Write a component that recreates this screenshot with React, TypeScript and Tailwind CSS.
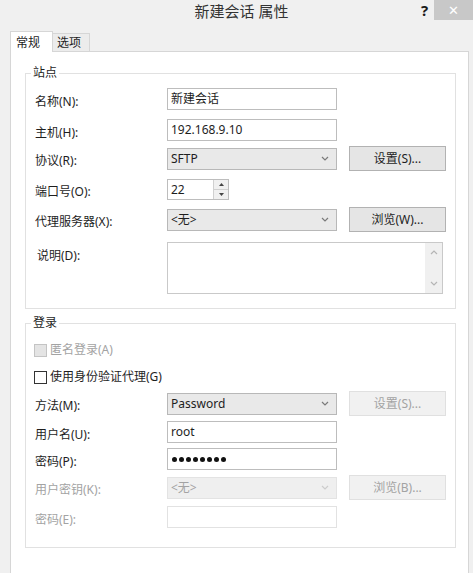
import React from 'react';

const font = "font-['Noto_Sans','Noto_Sans_CJK_SC',sans-serif]";

function Chevron({ disabled = false }: { disabled?: boolean }) {
    return (
        <svg width="8" height="5" viewBox="0 0 8 5">
            <path d="M1 1l3 3 3-3" fill="none" stroke={disabled ? '#cccccc' : '#7a7a7a'} strokeWidth="1.2" />
        </svg>
    );
}

function Label({ children, disabled = false }: { children: React.ReactNode; disabled?: boolean }) {
    return <div className={`w-[132px] pt-[5px] text-[12px] leading-[16px] ${disabled ? 'text-[#a3a3a3]' : 'text-[#1e1e1e]'}`}>{children}</div>;
}

function TextBox({ value, disabled = false }: { value?: React.ReactNode; disabled?: boolean }) {
    return (
        <div
            className={`flex h-[22px] w-[170px] items-center border bg-white px-[3px] text-[12px] text-[#1e1e1e] ${disabled ? 'border-[#e2e2e2]' : 'border-[#bdbdbd]'}`}
        >
            {value}
        </div>
    );
}

function Select({ value, disabled = false }: { value: string; disabled?: boolean }) {
    return (
        <div
            className={`flex h-[22px] w-[170px] items-center justify-between border pr-[7px] pl-[3px] text-[12px] ${
                disabled ? 'border-[#e3e3e3] bg-[#efefef] text-[#a3a3a3]' : 'border-[#b8b8b8] bg-[#e9e9e9] text-[#1e1e1e]'
            }`}
        >
            <span>{value}</span>
            <Chevron disabled={disabled} />
        </div>
    );
}

function Button({ children, disabled = false }: { children: React.ReactNode; disabled?: boolean }) {
    return (
        <div
            className={`ml-[12px] flex h-[25px] w-[97px] items-center justify-center border text-[12px] ${
                disabled ? 'border-[#e0e0e0] bg-[#f1f1f1] text-[#a3a3a3]' : 'border-[#b2b2b2] bg-[#e5e5e5] text-[#1e1e1e]'
            }`}
        >
            {children}
        </div>
    );
}

export default function App() {
    return (
        <div className={`flex h-[573px] w-[473px] flex-col overflow-hidden bg-[#f0f0f0] ${font}`}>
            {/* Title bar */}
            <div className="flex h-[21px] items-center">
                <div className="w-[68px]" />
                <div className="flex-1 text-center text-[15px] leading-[20px] text-[#333]">新建会话 属性</div>
                <div className="flex h-full w-[58px] items-start">
                    <div className="w-[19px] pt-[1px] text-center text-[15px] leading-[18px] font-bold text-[#1a1a1a]">?</div>
                    <div className="flex h-[20px] w-[39px] items-center justify-center bg-[#c8c8c8] text-[13px] leading-none text-white">✕</div>
                </div>
            </div>

            {/* Tabs */}
            <div className="flex h-[30px] items-end pl-[10px]">
                <div className="relative z-10 -mb-px h-[21px] w-[43px] border-x border-t border-[#d6d6d6] bg-white pt-[3px] pl-[5px] text-[12px] leading-[16px] text-[#1e1e1e]">
                    常规
                </div>
                <div className="h-[18px] w-[37px] border-t border-r border-[#d6d6d6] bg-[#ececec] pt-[1px] pl-[4px] text-[12px] leading-[16px] text-[#1e1e1e]">
                    选项
                </div>
            </div>

            {/* Panel */}
            <div className="mr-[4px] ml-[10px] flex-1 border-x border-t border-[#d6d6d6] bg-white pt-[13px]">
                {/* 站点 */}
                <fieldset className="mr-[12px] ml-[14px] border border-[#e1e1e1] px-0 pb-[14px]">
                    <legend className="ml-[5px] px-[2px] text-[12px] leading-[16px] text-[#1e1e1e]">站点</legend>
                    <div className="pl-[9px]">
                        <div className="mt-[7px] flex h-[22px] items-center">
                            <Label>名称(N):</Label>
                            <TextBox value="新建会话" />
                        </div>
                        <div className="mt-[9px] flex h-[22px] items-center">
                            <Label>主机(H):</Label>
                            <TextBox value="192.168.9.10" />
                        </div>
                        <div className="mt-[5px] flex h-[25px] items-center">
                            <Label>协议(R):</Label>
                            <Select value="SFTP" />
                            <Button>设置(S)...</Button>
                        </div>
                        <div className="mt-[8px] flex h-[21px] items-center">
                            <Label>端口号(O):</Label>
                            <div className="flex h-[21px] w-[62px] border border-[#bdbdbd] bg-white">
                                <div className="flex-1 px-[3px] text-[12px] leading-[19px] text-[#1e1e1e]">22</div>
                                <div className="flex w-[15px] flex-col border-l border-[#d0d0d0]">
                                    <div className="flex flex-1 items-center justify-center border-b border-[#d0d0d0] bg-[#f0f0f0]">
                                        <svg width="5" height="3" viewBox="0 0 5 3">
                                            <path d="M0 3L2.5 0 5 3z" fill="#444" />
                                        </svg>
                                    </div>
                                    <div className="flex flex-1 items-center justify-center bg-[#f0f0f0]">
                                        <svg width="5" height="3" viewBox="0 0 5 3">
                                            <path d="M0 0L2.5 3 5 0z" fill="#444" />
                                        </svg>
                                    </div>
                                </div>
                            </div>
                        </div>
                        <div className="mt-[7px] flex h-[25px] items-center">
                            <Label>代理服务器(X):</Label>
                            <Select value="<无>" />
                            <Button>浏览(W)...</Button>
                        </div>
                        <div className="mt-[10px] flex items-start">
                            <div className="w-[132px] pt-[6px] pl-[2px] text-[12px] leading-[16px] text-[#1e1e1e]">说明(D):</div>
                            <div className="flex h-[52px] w-[276px] border border-[#c9c9c9] bg-white">
                                <div className="flex-1" />
                                <div className="flex w-[17px] flex-col items-center justify-between bg-[#f0f0f0] py-[7px]">
                                    <svg width="8" height="5" viewBox="0 0 8 5">
                                        <path d="M1 4l3-3 3 3" fill="none" stroke="#b5b5b5" strokeWidth="1.2" />
                                    </svg>
                                    <svg width="8" height="5" viewBox="0 0 8 5">
                                        <path d="M1 1l3 3 3-3" fill="none" stroke="#b5b5b5" strokeWidth="1.2" />
                                    </svg>
                                </div>
                            </div>
                        </div>
                    </div>
                </fieldset>

                {/* 登录 */}
                <fieldset className="mt-[6px] mr-[12px] ml-[14px] border border-[#e1e1e1] px-0 pb-[19px]">
                    <legend className="ml-[5px] px-[2px] text-[12px] leading-[16px] text-[#1e1e1e]">登录</legend>
                    <div className="pl-[9px]">
                        <div className="mt-[11px] flex h-[16px] items-center">
                            <div className="-ml-px h-[13px] w-[13px] border border-[#c4c4c4] bg-[#e4e4e4]" />
                            <span className="ml-[3px] text-[12px] text-[#a3a3a3]">匿名登录(A)</span>
                        </div>
                        <div className="mt-[11px] flex h-[16px] items-center">
                            <div className="-ml-px h-[13px] w-[13px] border border-[#333] bg-white" />
                            <span className="ml-[3px] text-[12px] text-[#1e1e1e]">使用身份验证代理(G)</span>
                        </div>
                        <div className="mt-[6px] flex h-[25px] items-center">
                            <Label>方法(M):</Label>
                            <Select value="Password" />
                            <Button disabled>设置(S)...</Button>
                        </div>
                        <div className="mt-[5px] flex h-[22px] items-center">
                            <Label>用户名(U):</Label>
                            <TextBox value="root" />
                        </div>
                        <div className="mt-[5px] flex h-[22px] items-center">
                            <Label>密码(P):</Label>
                            <TextBox
                                value={
                                    <div className="flex gap-[2px] pl-[1px]">
                                        {Array.from({ length: 8 }).map((_, i) => (
                                            <span key={i} className="h-[5px] w-[5px] rounded-full bg-[#111]" />
                                        ))}
                                    </div>
                                }
                            />
                        </div>
                        <div className="mt-[5px] flex h-[25px] items-center">
                            <Label disabled>用户密钥(K):</Label>
                            <Select value="<无>" disabled />
                            <Button disabled>浏览(B)...</Button>
                        </div>
                        <div className="mt-[6px] flex h-[22px] items-center">
                            <Label disabled>密码(E):</Label>
                            <TextBox disabled />
                        </div>
                    </div>
                </fieldset>
            </div>
        </div>
    );
}
